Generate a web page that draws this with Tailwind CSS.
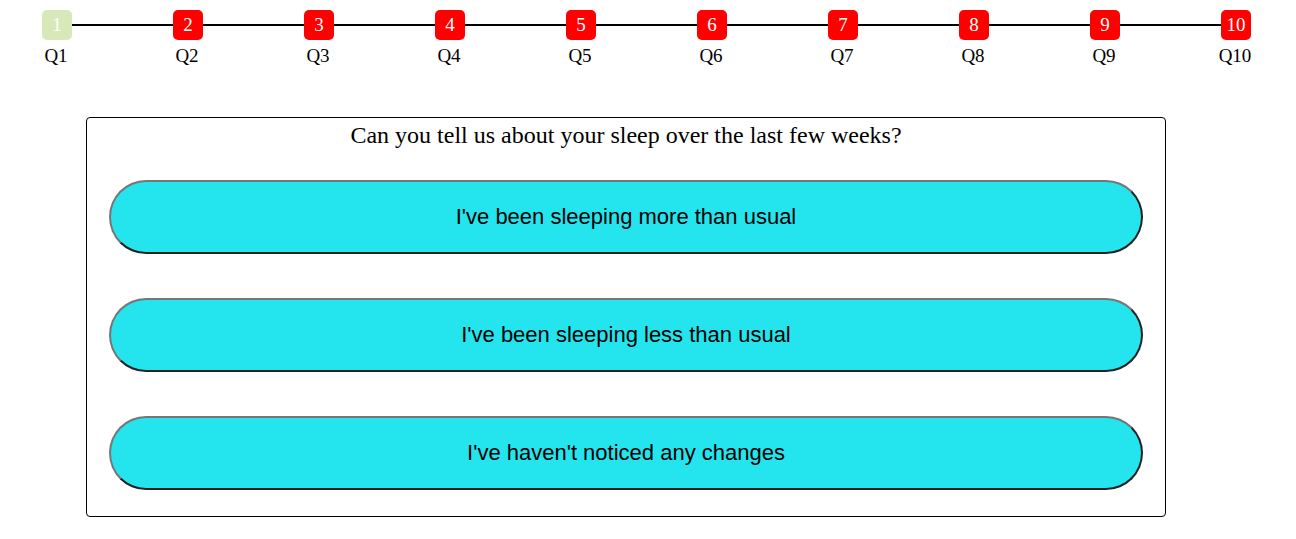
<!DOCTYPE html>
<html lang="en">
<head>
<meta charset="utf-8">
<meta name="viewport" content="width=device-width, initial-scale=1">
<title>Sleep questionnaire</title>
<script src="https://cdn.jsdelivr.net/npm/@tailwindcss/browser@4"></script>
</head>
<body class="bg-white text-black font-['Liberation_Serif',serif]">
<nav aria-label="Progress" class="pt-2.5 pl-[42px] pr-[45px]">
  <ol id="steps" class="flex text-[19px] leading-[22px]"></ol>
</nav>
<main class="mt-[50px] ml-[86px] mr-[130px] rounded-[4px] border border-black px-[22px] pb-[26px]">
  <h1 class="pt-[3px] text-center text-[24px] leading-[28px]">Can you tell us about your sleep over the last few weeks?</h1>
  <div class="mt-[31px] flex flex-col gap-[44px] font-['Liberation_Sans',sans-serif] text-[22px] leading-[26px]">
    <button type="button" class="h-[74px] w-full rounded-full border-2 border-t-[#767676] border-l-[#767676] border-r-[#212121] border-b-[#212121] bg-[#24e5ee]">I've been sleeping more than usual</button>
    <button type="button" class="h-[74px] w-full rounded-full border-2 border-t-[#767676] border-l-[#767676] border-r-[#212121] border-b-[#212121] bg-[#24e5ee]">I've been sleeping less than usual</button>
    <button type="button" class="h-[74px] w-full rounded-full border-2 border-t-[#767676] border-l-[#767676] border-r-[#212121] border-b-[#212121] bg-[#24e5ee]">I've haven't noticed any changes</button>
  </div>
</main>
<script>
const steps = document.getElementById('steps');
for (let n = 1; n <= 10; n++) {
  const color = n === 1 ? 'bg-[#d7e9b9]' : 'bg-[#ff0000]';
  const grow = n < 10 ? 'flex-1' : 'flex-none';
  const line = n < 10 ? '<span class="h-0.5 flex-1 bg-black"></span>' : '';
  steps.insertAdjacentHTML('beforeend', `
    <li class="${grow}">
      <div class="flex items-center">
        <span class="flex size-[30px] items-center justify-center rounded-[5px] text-white ${color}">${n}</span>${line}
      </div>
      <div class="mt-[5px] flex w-7 justify-center whitespace-nowrap">Q${n}</div>
    </li>`);
}
</script>
</body>
</html>
